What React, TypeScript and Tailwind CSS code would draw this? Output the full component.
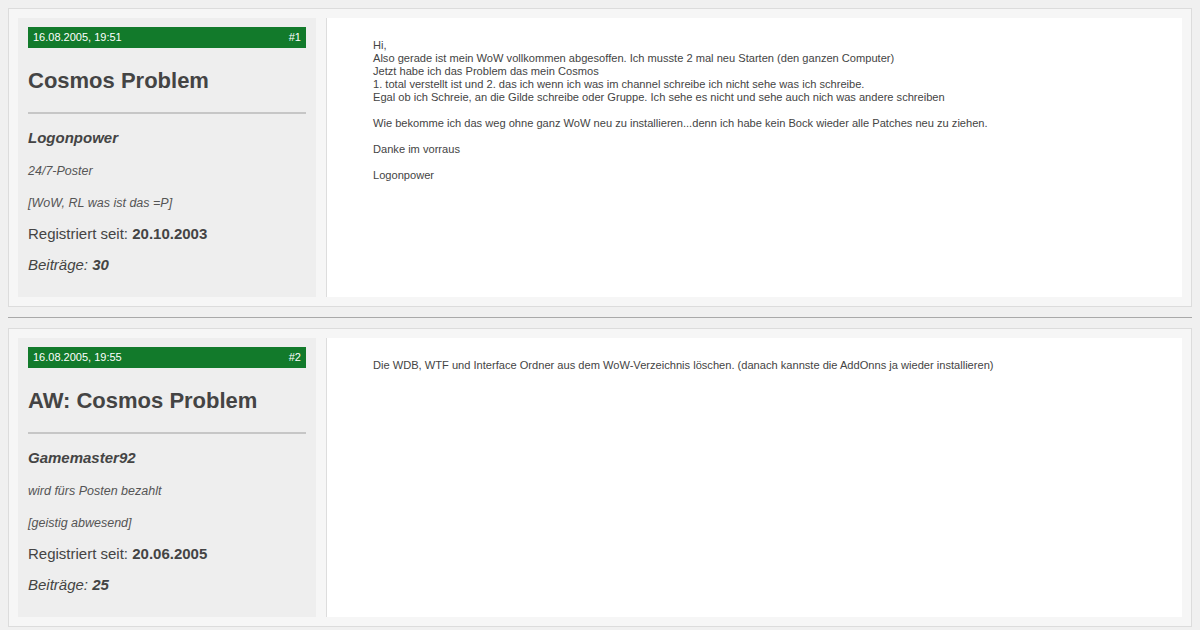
import React from "react";

interface Post {
  date: string;
  nr: string;
  title: string;
  user: string;
  rank: string;
  status: string;
  since: string;
  posts: string;
  body: React.ReactNode;
}

const POSTS: Post[] = [
  {
    date: "16.08.2005, 19:51",
    nr: "#1",
    title: "Cosmos Problem",
    user: "Logonpower",
    rank: "24/7-Poster",
    status: "[WoW, RL was ist das =P]",
    since: "20.10.2003",
    posts: "30",
    body: (
      <>
        Hi,
        <br />
        Also gerade ist mein WoW vollkommen abgesoffen. Ich musste 2 mal neu Starten (den ganzen Computer)
        <br />
        Jetzt habe ich das Problem das mein Cosmos
        <br />
        1. total verstellt ist und 2. das ich wenn ich was im channel schreibe ich nicht sehe was ich schreibe.
        <br />
        Egal ob ich Schreie, an die Gilde schreibe oder Gruppe. Ich sehe es nicht und sehe auch nich was andere schreiben
        <br />
        <br />
        Wie bekomme ich das weg ohne ganz WoW neu zu installieren...denn ich habe kein Bock wieder alle Patches neu zu ziehen.
        <br />
        <br />
        Danke im vorraus
        <br />
        <br />
        Logonpower
      </>
    ),
  },
  {
    date: "16.08.2005, 19:55",
    nr: "#2",
    title: "AW: Cosmos Problem",
    user: "Gamemaster92",
    rank: "wird fürs Posten bezahlt",
    status: "[geistig abwesend]",
    since: "20.06.2005",
    posts: "25",
    body: (
      <>
        Die WDB, WTF und Interface Ordner aus dem WoW-Verzeichnis löschen. (danach kannste die AddOnns ja wieder installieren)
      </>
    ),
  },
];

const PostBox: React.FC<{ p: Post }> = ({ p }) => (
  <div className="mx-2 border border-[#dcdcdc] bg-[#f6f6f6] p-[9px] flex">
    {/* user info */}
    <div className="w-[298px] h-[279px] shrink-0 bg-[#eeeeee] px-[10px] pt-[9px] text-[#444]">
      <div className="h-[21px] bg-[#127a2b] text-white text-[11px] leading-[21px] px-[5px] flex justify-between">
        <span>{p.date}</span>
        <span>{p.nr}</span>
      </div>
      <h2 className="mt-[20px] text-[22px] leading-[26px] font-bold text-[#444]">{p.title}</h2>
      <div className="mt-[18px] h-[2px] bg-[#c6c6c6]" />
      <div className="mt-[15px] text-[15px] leading-[18px] font-bold italic">{p.user}</div>
      <div className="mt-[17px] text-[12.5px] leading-[14px] italic text-[#555]">{p.rank}</div>
      <div className="mt-[18px] text-[12.5px] leading-[14px] italic text-[#555]">{p.status}</div>
      <div className="mt-[15px] text-[15px] leading-[18px]">
        Registriert seit: <b>{p.since}</b>
      </div>
      <div className="mt-[13px] text-[15px] leading-[18px] italic">
        Beiträge: <b>{p.posts}</b>
      </div>
    </div>
    <div className="w-[10px] shrink-0" />
    {/* message */}
    <div className="flex-1 bg-white border-l border-[#dddddd] pl-[46px] pr-[20px] pt-[21px] text-[11.1px] leading-[13px] text-[#444]">
      {p.body}
    </div>
  </div>
);

export default function App() {
  return (
    <div className="min-h-[630px] bg-[#f0f0f0] pt-2 font-['Liberation_Sans',Arial,sans-serif]">
      <PostBox p={POSTS[0]} />
      <div className="mx-2 mt-[10px] mb-[10px] h-px bg-[#a9a9a9]" />
      <PostBox p={POSTS[1]} />
    </div>
  );
}
